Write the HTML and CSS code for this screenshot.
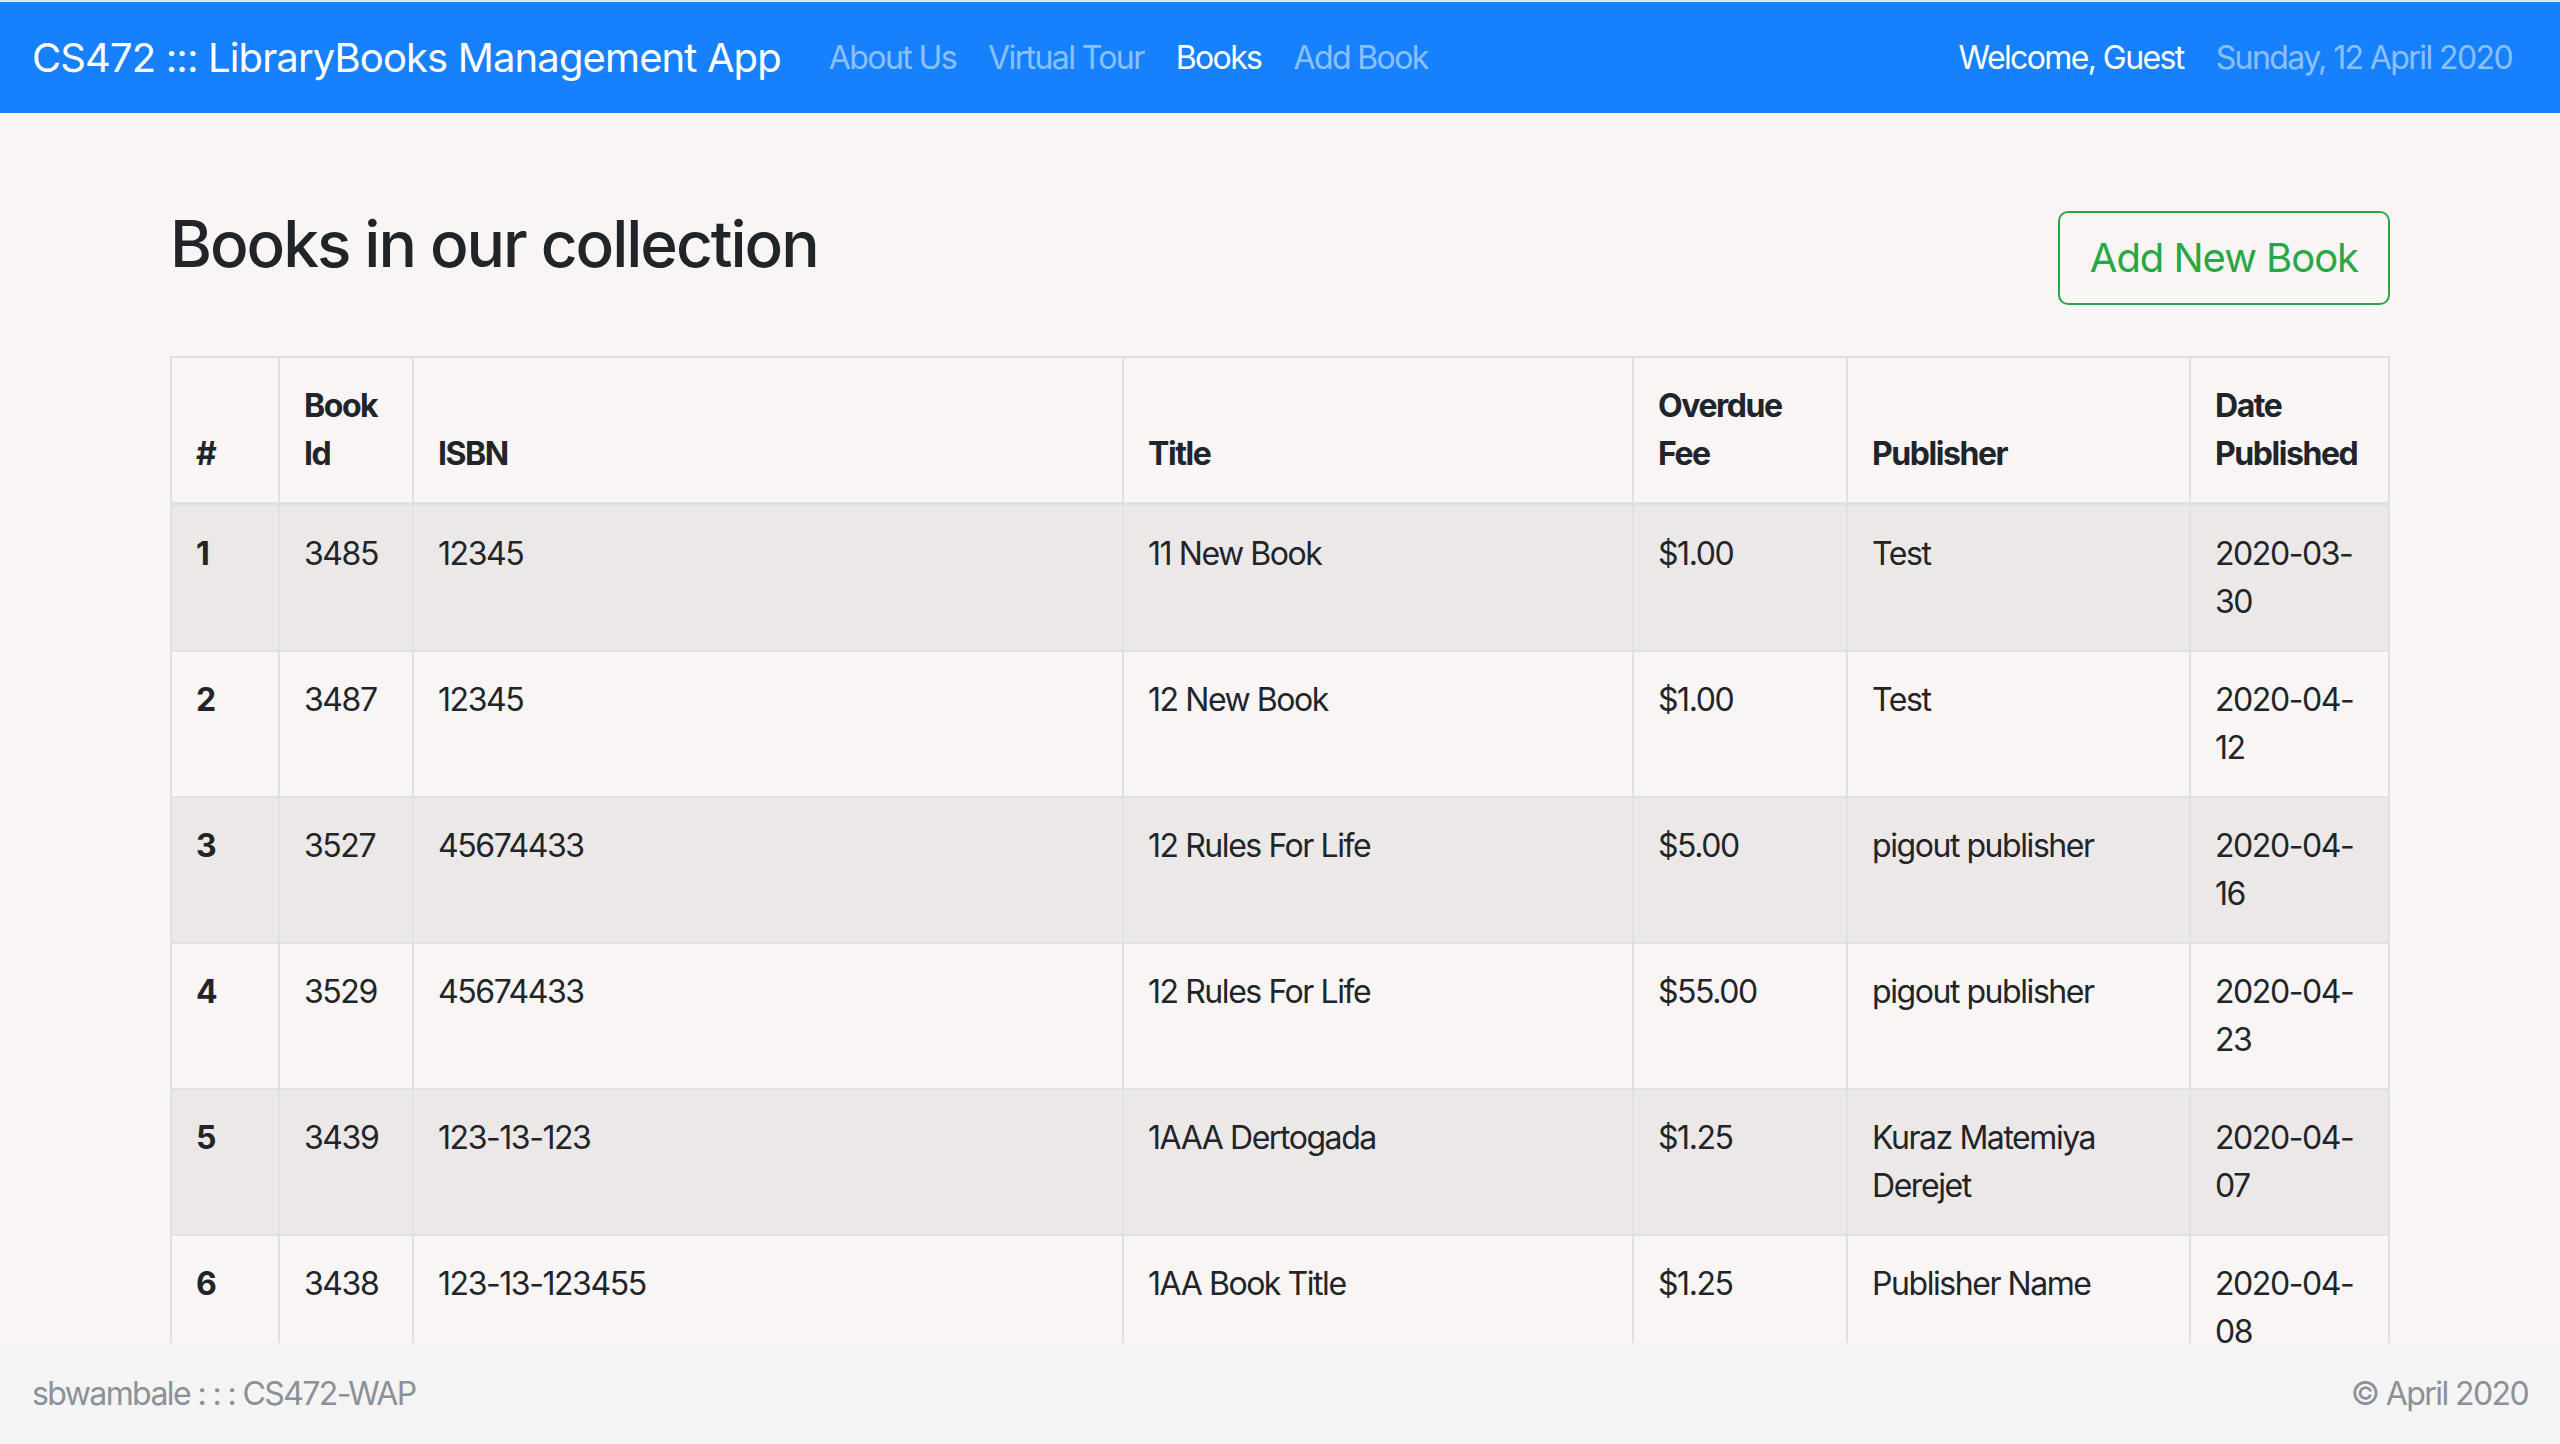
FILE: index.html
```html
<!DOCTYPE html>
<html lang="en">
<head>
<meta charset="utf-8">
<title>Books</title>
<link rel="stylesheet" href="styles.css">
</head>
<body>
<nav class="navbar">
  <a class="brand" href="#">CS472 ::: LibraryBooks Management App</a>
  <ul class="nav">
    <li><a class="nav-link" href="#">About Us</a></li>
    <li><a class="nav-link" href="#">Virtual Tour</a></li>
    <li><a class="nav-link active" href="#">Books</a></li>
    <li><a class="nav-link" href="#">Add Book</a></li>
  </ul>
  <ul class="nav nav-right">
    <li><span class="nav-link active">Welcome, Guest</span></li>
    <li><span class="nav-link">Sunday, 12 April 2020</span></li>
  </ul>
</nav>

<main class="container">
  <div class="page-head">
    <h2 class="title">Books in our collection</h2>
    <a class="btn-outline" href="#">Add New Book</a>
  </div>
  <table class="books">
    <colgroup>
      <col class="c-num"><col class="c-id"><col class="c-isbn"><col class="c-title"><col class="c-fee"><col class="c-pub"><col class="c-date">
    </colgroup>
    <thead>
      <tr><th>#</th><th>Book Id</th><th>ISBN</th><th>Title</th><th>Overdue Fee</th><th>Publisher</th><th>Date Published</th></tr>
    </thead>
    <tbody>
      <tr><th>1</th><td>3485</td><td>12345</td><td>11 New Book</td><td>$1.00</td><td>Test</td><td>2020-03-30</td></tr>
      <tr><th>2</th><td>3487</td><td>12345</td><td>12 New Book</td><td>$1.00</td><td>Test</td><td>2020-04-12</td></tr>
      <tr><th>3</th><td>3527</td><td>45674433</td><td>12 Rules For Life</td><td>$5.00</td><td>pigout publisher</td><td>2020-04-16</td></tr>
      <tr><th>4</th><td>3529</td><td>45674433</td><td>12 Rules For Life</td><td>$55.00</td><td>pigout publisher</td><td>2020-04-23</td></tr>
      <tr><th>5</th><td>3439</td><td>123-13-123</td><td>1AAA Dertogada</td><td>$1.25</td><td>Kuraz Matemiya Derejet</td><td>2020-04-07</td></tr>
      <tr><th>6</th><td>3438</td><td>123-13-123455</td><td>1AA Book Title</td><td>$1.25</td><td>Publisher Name</td><td>2020-04-08</td></tr>
    </tbody>
  </table>
</main>

<footer class="footer">
  <span>sbwambale : : : CS472-WAP</span>
  <span>&copy; April 2020</span>
</footer>
</body>
</html>
```

FILE: styles.css
```css
* { box-sizing: border-box; }
html, body { margin: 0; padding: 0; }
body {
  background: #f8f5f4;
  color: #212529;
  font-family: Inter, "Liberation Sans", sans-serif;
  font-size: 32px;
  line-height: 1.5;
  letter-spacing: -0.045em;
}
a { text-decoration: none; }

.navbar {
  display: flex;
  align-items: center;
  border-top: 2px solid #e6e6e6;
  background: #1781fd;
  padding: 16px 32px;
  height: 113px;
}
.brand {
  color: #fff;
  font-size: 40px;
  line-height: 60px;
  letter-spacing: -0.022em;
  padding: 10px 0;
  margin-right: 32px;
  white-space: nowrap;
}
.nav {
  display: flex;
  list-style: none;
  margin: 0;
  padding: 0;
}
.nav-right { margin-left: auto; }
.nav-link {
  display: block;
  padding: 16px 16px;
  color: rgba(255,255,255,.5);
  white-space: nowrap;
  letter-spacing: -0.05em;
}
.nav-link.active { color: #fff; }

.container {
  width: 2280px;
  margin: 0 auto;
  padding: 0 30px;
}
.page-head {
  display: flex;
  justify-content: space-between;
  align-items: flex-start;
  margin-top: 93px;
}
.title {
  margin: 0;
  font-size: 64px;
  font-weight: 500;
  line-height: 1.2;
  letter-spacing: -0.032em;
}
.btn-outline {
  margin-top: 5px;
  color: #28a745;
  border: 2px solid #28a745;
  border-radius: 10px;
  font-size: 40px;
  line-height: 60px;
  letter-spacing: -0.026em;
  padding: 15px 30px;
}

.books {
  margin-top: 51px;
  width: 100%;
  table-layout: fixed;
  border-collapse: collapse;
  border: 2px solid #dee2e6;
}
.c-num { width: 108px; }
.c-id { width: 134px; }
.c-isbn { width: 710px; }
.c-title { width: 510px; }
.c-fee { width: 214px; }
.c-pub { width: 343px; }
.c-date { width: 199px; }
.books th, .books td {
  border: 2px solid #dee2e6;
  padding: 24px;
  text-align: left;
  vertical-align: top;
}
.books thead th {
  vertical-align: bottom;
  border-bottom-width: 4px;
  font-weight: 700;
}
.books tbody th { font-weight: 700; }
.books tbody tr:nth-child(odd) { background: rgba(0,0,0,.05); }

.footer {
  position: fixed;
  left: 0;
  right: 0;
  bottom: 0;
  height: 101px;
  display: flex;
  justify-content: space-between;
  align-items: center;
  padding: 0 32px;
  background: #f4f4f4;
  color: #8a9198;
  letter-spacing: -0.05em;
}
```
